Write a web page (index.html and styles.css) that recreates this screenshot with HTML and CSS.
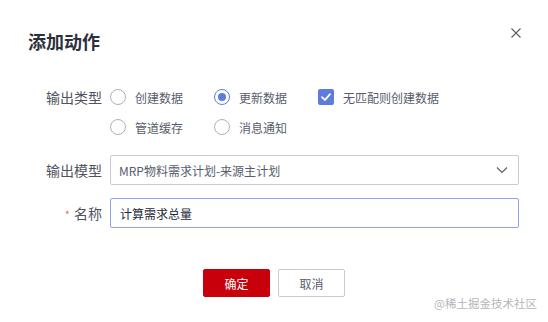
FILE: index.html
```html
<!DOCTYPE html>
<html lang="zh-CN">
<head>
  <meta charset="UTF-8" />
  <meta name="viewport" content="width=device-width, initial-scale=1.0"/>
  <title>添加动作</title>
  <link rel="stylesheet" href="styles.css">
</head>
<body>
  <div class="dialog">
    <div class="dialog-header">
      <h2>添加动作</h2>
      <button class="close" type="button" aria-label="关闭">
        <svg width="10" height="10" viewBox="0 0 10 10">
          <path d="M0.5 0.5 L9.5 9.5 M9.5 0.5 L0.5 9.5" stroke="#5a5d66" stroke-width="1.1" fill="none"/>
        </svg>
      </button>
    </div>

    <form class="dialog-body">
      <div class="form-row">
        <label class="form-label">输出类型</label>
        <div class="options">
          <span class="option"><i class="radio"></i>创建数据</span>
          <span class="option"><i class="radio checked"></i>更新数据</span>
          <span class="option">
            <i class="checkbox">
              <svg width="12" height="12" viewBox="0 0 12 12">
                <path d="M2 6.2 L5 9 L10 3.2" stroke="#fff" stroke-width="1.8" fill="none" stroke-linecap="round" stroke-linejoin="round"/>
              </svg>
            </i>无匹配则创建数据
          </span>
          <span class="option"><i class="radio"></i>管道缓存</span>
          <span class="option"><i class="radio"></i>消息通知</span>
        </div>
      </div>

      <div class="form-row">
        <label class="form-label">输出模型</label>
        <div class="select">
          <span>MRP物料需求计划-来源主计划</span>
          <svg width="12" height="8" viewBox="0 0 12 8">
            <path d="M1 1.5 L6 6.5 L11 1.5" stroke="#5a5d66" stroke-width="1.1" fill="none"/>
          </svg>
        </div>
      </div>

      <div class="form-row">
        <label class="form-label"><span class="required">*</span>名称</label>
        <div class="input">计算需求总量</div>
      </div>
    </form>

    <div class="dialog-footer">
      <button class="btn btn-primary" type="button">确定</button>
      <button class="btn" type="button">取消</button>
    </div>

    <div class="watermark">@稀土掘金技术社区</div>
  </div>
</body>
</html>
```

FILE: styles.css
```css
body {
  margin: 0;
  background: #fff;
  font-family: "Noto Sans CJK SC", "Noto Sans", sans-serif;
  color: #252b3a;
}

.dialog {
  position: relative;
  width: 548px;
  height: 322px;
  box-sizing: border-box;
}

.dialog-header {
  display: flex;
  justify-content: space-between;
  align-items: flex-start;
  padding: 29px 27px 0 28px;
}

.dialog-header h2 {
  margin: 0;
  font-size: 18px;
  line-height: 24px;
  font-weight: 600;
  color: #2d313b;
}

.close {
  width: 10px;
  height: 10px;
  padding: 0;
  margin-top: -1px;
  border: none;
  background: none;
  display: flex;
  cursor: pointer;
}

.dialog-body {
  display: flex;
  flex-direction: column;
  gap: 13px;
  margin: 29px 29px 0 28px;
}

.form-row {
  display: flex;
  align-items: flex-start;
  gap: 8px;
}

.form-label {
  width: 74px;
  flex-shrink: 0;
  text-align: right;
  font-size: 14px;
  line-height: 30px;
  color: #50545e;
}

.required {
  color: #f26d6d;
  font-size: 11px;
  margin-right: 4px;
}

.options {
  display: grid;
  grid-template-columns: 104px 104px auto;
  grid-auto-rows: 30px;
}

.option {
  display: flex;
  align-items: center;
  gap: 9px;
  font-size: 12px;
  color: #575d6c;
}

.radio {
  width: 16px;
  height: 16px;
  box-sizing: border-box;
  border: 1px solid #adb0b8;
  border-radius: 50%;
  display: flex;
  align-items: center;
  justify-content: center;
}

.radio.checked {
  border-color: #5e7ce0;
}

.radio.checked::after {
  content: "";
  width: 8px;
  height: 8px;
  border-radius: 50%;
  background: #5e7ce0;
}

.checkbox {
  width: 16px;
  height: 16px;
  border-radius: 2px;
  background: #5e7ce0;
  display: flex;
  align-items: center;
  justify-content: center;
}

.select,
.input {
  flex: 1;
  height: 30px;
  box-sizing: border-box;
  border: 1px solid #c9cbd0;
  border-radius: 2px;
  padding: 0 9px 0 8px;
  display: flex;
  align-items: center;
  justify-content: space-between;
  font-size: 12px;
  color: #575d6c;
}

.select svg {
  margin-right: 1px;
}

.input {
  padding-left: 9px;
  border-color: #8ea3ec;
  color: #252b3a;
}

.dialog-footer {
  display: flex;
  justify-content: center;
  gap: 8px;
  margin-top: 40px;
}

.btn {
  width: 67px;
  height: 28px;
  box-sizing: border-box;
  border: 1px solid #c9cbd0;
  border-radius: 2px;
  background: #fff;
  font-family: inherit;
  font-size: 12px;
  color: #575d6c;
  cursor: pointer;
}

.btn-primary {
  background: #c7000b;
  border-color: #c7000b;
  color: #fff;
}

.watermark {
  position: absolute;
  right: 11px;
  bottom: 12px;
  font-size: 11.5px;
  line-height: 14px;
  color: #b4b6bb;
}
```
